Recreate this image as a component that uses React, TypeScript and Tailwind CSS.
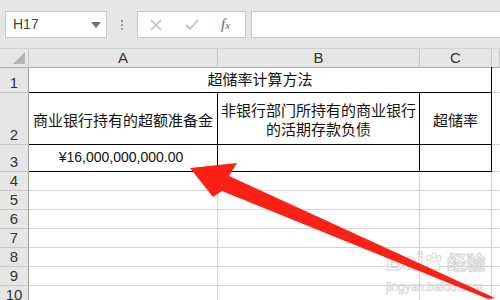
import React from 'react';

const cjk = { fontFamily: '"Noto Sans CJK SC", "Liberation Sans", sans-serif' };
const latin = { fontFamily: '"Liberation Sans", "Noto Sans CJK SC", sans-serif' };

const gridCols = 'grid grid-cols-[29px_189px_202px_72px_1fr]';

function RowHead({ n }: { n: number }) {
  return (
    <div
      className="flex items-end justify-center bg-[#e6e6e6] border-r border-b border-r-[#9f9f9f] border-b-[#c9c9c9] text-[15px] leading-[18px] text-[#333]"
      style={latin}
    >
      {n}
    </div>
  );
}

function Toolbar() {
  return (
    <div className="flex h-[48px] items-start bg-[#e6e6e6] pt-[11px]">
      <div className="ml-[5px] flex h-[27px] w-[102px] items-center justify-between border border-[#c6c6c6] bg-white pl-[7px] pr-[5px]">
        <span className="text-[14px] text-[#444]" style={latin}>H17</span>
        <svg width="10" height="6" viewBox="0 0 10 6"><path d="M0 0h10L5 6z" fill="#777" /></svg>
      </div>
      <div className="ml-[14px] mt-[9px] flex flex-col gap-[2px]">
        <span className="h-[2px] w-[2px] bg-[#9c9c9c]" />
        <span className="h-[2px] w-[2px] bg-[#9c9c9c]" />
        <span className="h-[2px] w-[2px] bg-[#9c9c9c]" />
      </div>
      <div className="ml-[14px] flex h-[27px] w-[109px] items-center border border-[#c6c6c6] bg-white">
        <svg className="ml-[12px]" width="12" height="12" viewBox="0 0 12 12">
          <path d="M1 1l10 10M11 1L1 11" stroke="#c2c2c2" strokeWidth="1.6" />
        </svg>
        <svg className="ml-[23px]" width="14" height="11" viewBox="0 0 14 11">
          <path d="M1 6l4 4 8-9" stroke="#c2c2c2" strokeWidth="1.8" fill="none" />
        </svg>
        <span
          className="ml-[22px] text-[15px] italic text-[#666]"
          style={{ fontFamily: '"Liberation Serif", serif' }}
        >
          f<span className="text-[11px]">x</span>
        </span>
      </div>
      <div className="ml-[5px] h-[27px] flex-1 border border-r-0 border-[#c6c6c6] bg-white" />
    </div>
  );
}

function ColHeader() {
  const cell =
    'flex items-end justify-center bg-[#e6e6e6] border-r border-b border-r-[#c6c6c6] border-b-[#ababab] text-[15px] leading-[18px] text-[#333]';
  return (
    <div className={`${gridCols} h-[19px] border-t border-[#d4d4d4]`}>
      <div className="relative bg-[#e6e6e6] border-r border-b border-r-[#c6c6c6] border-b-[#ababab]">
        <svg className="absolute bottom-[3px] right-[3px]" width="12" height="12" viewBox="0 0 12 12">
          <path d="M12 0v12H0z" fill="#b5b5b5" />
        </svg>
      </div>
      <div className={cell} style={latin}>A</div>
      <div className={cell} style={latin}>B</div>
      <div className={cell} style={latin}>C</div>
      <div className={cell} />
    </div>
  );
}

export default function App() {
  const black = 'border-r border-b border-black';
  const grey = 'border-r border-b border-[#d4d4d4]';
  const empty = [4, 5, 6, 7, 8, 9, 10];

  return (
    <div className="relative h-[300px] w-[500px] overflow-hidden bg-white">
      <Toolbar />
      <ColHeader />

      <div className={`${gridCols} h-[26px]`}>
        <RowHead n={1} />
        <div className={`col-span-3 flex items-center justify-center text-[15px] text-[#111] ${black}`} style={cjk}>
          超储率计算方法
        </div>
        <div className="border-b border-[#d4d4d4]" />
      </div>

      <div className={`${gridCols} h-[52px]`}>
        <RowHead n={2} />
        <div className={`flex items-center justify-center pt-[4px] text-[15px] text-[#111] ${black}`} style={cjk}>
          商业银行持有的超额准备金
        </div>
        <div className={`flex flex-col items-center justify-center text-[15px] leading-[19px] text-[#111] ${black}`} style={cjk}>
          <span>非银行部门所持有的商业银行</span>
          <span>的活期存款负债</span>
        </div>
        <div className={`flex items-center justify-center pt-[4px] text-[15px] text-[#111] ${black}`} style={cjk}>
          超储率
        </div>
        <div className="border-b border-[#d4d4d4]" />
      </div>

      <div className={`${gridCols} h-[27px]`}>
        <RowHead n={3} />
        <div className={`flex items-end justify-center pb-[3px] pr-[4px] text-[14px] text-[#111] ${black}`} style={latin}>
          ¥16,000,000,000.00
        </div>
        <div className={black} />
        <div className={black} />
        <div className="border-b border-[#d4d4d4]" />
      </div>

      {empty.map(n => (
        <div key={n} className={`${gridCols} h-[19px]`}>
          <RowHead n={n} />
          <div className={grey} />
          <div className={grey} />
          <div className={grey} />
          <div className="border-b border-[#d4d4d4]" />
        </div>
      ))}

      {/* watermark */}
      <div className="pointer-events-none absolute left-[386px] top-[250px] flex flex-col items-start opacity-80">
        <div className="flex items-center text-[24px] font-bold leading-[24px] text-white" style={{ ...latin, WebkitTextStroke: '1px #c9c9c9' }}>
          Bai
          <svg width="20" height="20" viewBox="0 0 20 20" className="mx-[1px]">
            <g fill="white" stroke="#c9c9c9">
              <ellipse cx="5" cy="6" rx="2.2" ry="3" />
              <ellipse cx="10" cy="3.5" rx="2.2" ry="3" />
              <ellipse cx="15" cy="6" rx="2.2" ry="3" />
              <path d="M4 16c0-4 3-7 6-7s6 3 6 7c0 2-3 2-6 2s-6 0-6-2z" />
            </g>
          </svg>
          <span className="ml-[2px] text-[19px]" style={{ ...cjk, WebkitTextStroke: '1px #c9c9c9' }}>经验</span>
        </div>
        <div className="mt-[4px] text-[12px] text-white" style={{ ...latin, WebkitTextStroke: '0.6px #c9c9c9' }}>
          jingyan.baidu.com
        </div>
      </div>

      {/* red arrow */}
      <svg className="pointer-events-none absolute left-0 top-0" width="500" height="300" viewBox="0 0 500 300">
        <polygon
          points="190,168 237,163 229,176 495,298 488,299 222,191 213,197"
          fill="#fd2015"
        />
      </svg>
    </div>
  );
}
